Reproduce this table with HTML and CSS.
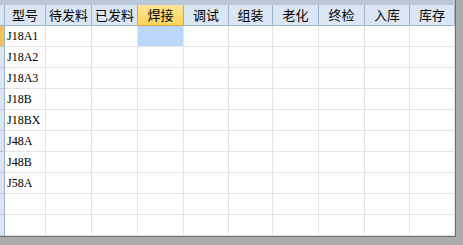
FILE: index.html
```html
<!DOCTYPE html>
<html lang="zh-CN">
	<head>
		<meta charset="UTF-8" />
		<title>生产进度</title>
		<link rel="stylesheet" href="styles.css">
	</head>
	<body>
		<div class="sheet">
			<div class="top-strip"></div>
			<div class="grid">
				<div class="row head">
					<div class="gutter"></div>
					<div class="cell c1">型号</div>
					<div class="cell c2">待发料</div>
					<div class="cell c3">已发料</div>
					<div class="cell c4 active">焊接</div>
					<div class="cell c5">调试</div>
					<div class="cell c6">组装</div>
					<div class="cell c7">老化</div>
					<div class="cell c8">终检</div>
					<div class="cell c9">入库</div>
					<div class="cell c10">库存</div>
				</div>
			</div>
		</div>

		<script>
			var models = ['J18A1', 'J18A2', 'J18A3', 'J18B', 'J18BX', 'J48A', 'J48B', 'J58A', '', ''];
			var grid = document.querySelector('.grid');

			models.forEach(function (name, i) {
				var row = document.createElement('div');
				row.className = 'row';

				var gutter = document.createElement('div');
				gutter.className = 'gutter' + (i === 0 ? ' current' : '');
				row.appendChild(gutter);

				for (var c = 1; c <= 10; c++) {
					var cell = document.createElement('div');
					cell.className = 'cell c' + c;
					if (c === 1) cell.textContent = name;
					if (i === 0 && c === 4) cell.className += ' selected';
					row.appendChild(cell);
				}
				grid.appendChild(row);
			});
		</script>
	</body>
</html>
```

FILE: styles.css
```css
html,
body {
	margin: 0;
	padding: 0;
	background-color: #ababab;
	height: 100%;
}

.sheet {
	width: 455px;
	border-right: 1px solid #6e6e6e;
	border-bottom: 1px solid #6e6e6e;
	background-color: #fff;
}

.top-strip {
	height: 5px;
	background-color: #b9c8da;
}

.row {
	display: flex;
	height: 21px;
}

.gutter,
.cell {
	box-sizing: border-box;
	height: 21px;
	flex: none;
}

.gutter {
	width: 5px;
	background-color: #dce6f3;
	border-right: 1px solid #9db3cc;
	border-bottom: 1px solid #b4c6db;
}

.gutter.current {
	background-color: #f7c15a;
}

.cell {
	border-right: 1px solid #e4e4e4;
	border-bottom: 1px solid #e4e4e4;
	font-family: "Liberation Serif", serif;
	font-size: 12px;
	line-height: 20px;
	padding-left: 2px;
	color: #000;
	white-space: nowrap;
}

.cell.selected {
	background-color: #b9d8fc;
}

.head .gutter {
	border-bottom-color: #9db3cc;
}

.head .cell {
	background-color: #dbe6f4;
	border-right-color: #9db3cc;
	border-bottom-color: #9db3cc;
	font-family: "Noto Sans CJK SC", sans-serif;
	font-size: 13px;
	text-align: center;
	padding-left: 0;
}

.head .cell.active {
	background: linear-gradient(#ffe69a, #fcd258);
	border: 1px solid #dea544;
	border-left: none;
	border-top: none;
}

.c1 { width: 41px; }
.c2 { width: 46px; }
.c3 { width: 46px; }
.c4 { width: 46px; }
.c5 { width: 45px; }
.c6 { width: 44px; }
.c7 { width: 46px; }
.c8 { width: 46px; }
.c9 { width: 45px; }
.c10 { width: 45px; }
```
